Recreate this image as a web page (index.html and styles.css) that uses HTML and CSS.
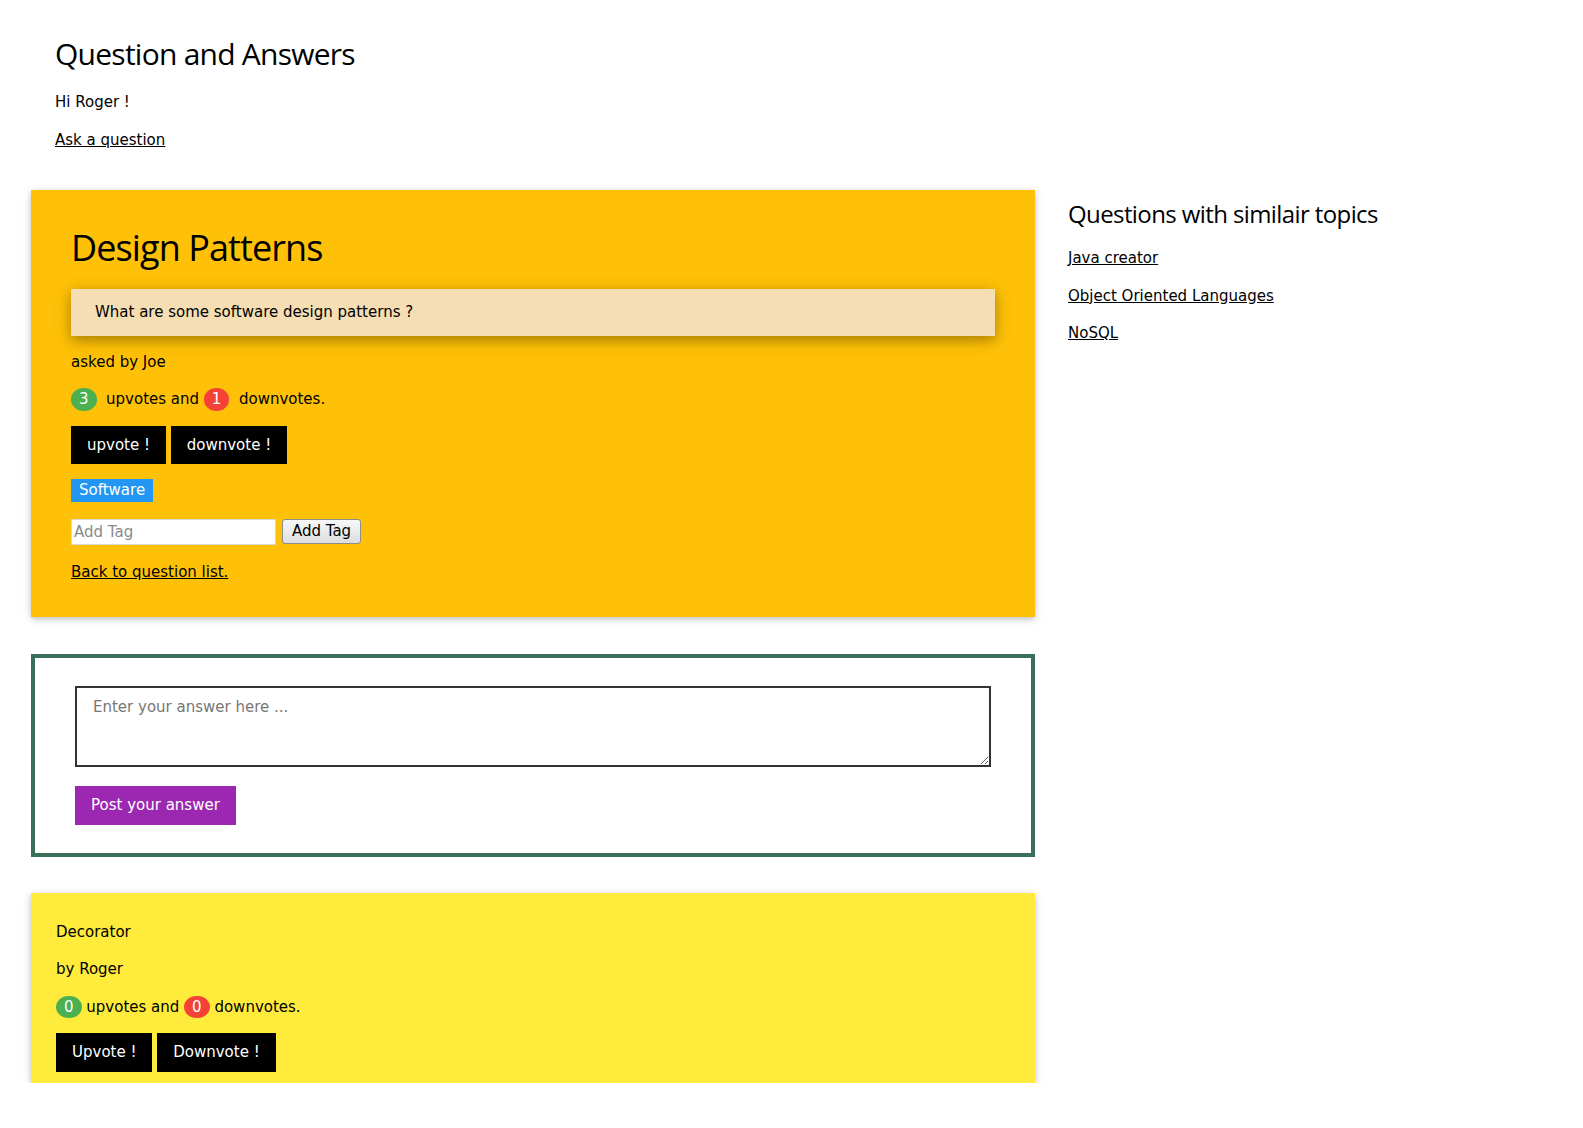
FILE: index.html
```html
<!DOCTYPE html>
<html lang="en">
<head>
<meta charset="utf-8">
<title>Question and Answers</title>
<link rel="stylesheet" href="styles.css">
</head>
<body>
<header class="page-header">
  <h2 class="page-title">Question and Answers</h2>
  <p>Hi Roger !</p>
  <p><a href="#">Ask a question</a></p>
</header>

<div class="row">
  <main class="main-col">
    <section class="question-card">
      <h1 class="question-title">Design Patterns</h1>
      <div class="question-body">What are some software design patterns ?</div>
      <p>asked by Joe</p>
      <p><span class="badge badge-green">3</span>&nbsp; upvotes and <span class="badge badge-red">1</span>&nbsp; downvotes.</p>
      <div class="btn-row"><button class="btn btn-black">upvote !</button> <button class="btn btn-black">downvote !</button></div>
      <p><span class="tag">Software</span></p>
      <form class="tag-form">
        <input class="tag-input" type="text" placeholder="Add Tag">
        <button class="tag-btn" type="button">Add Tag</button>
      </form>
      <p><a href="#">Back to question list.</a></p>
    </section>

    <section class="answer-box">
      <textarea class="answer-input" placeholder="Enter your answer here ..."></textarea>
      <div><button class="btn btn-purple">Post your answer</button></div>
    </section>

    <section class="answer-card">
      <p>Decorator</p>
      <p>by Roger</p>
      <p><span class="badge badge-green">0</span> upvotes and <span class="badge badge-red">0</span> downvotes.</p>
      <div class="btn-row"><button class="btn btn-black">Upvote !</button> <button class="btn btn-black">Downvote !</button></div>
    </section>
  </main>

  <aside class="side-col">
    <h3 class="side-title">Questions with similair topics</h3>
    <p><a href="#">Java creator</a></p>
    <p><a href="#">Object Oriented Languages</a></p>
    <p><a href="#">NoSQL</a></p>
  </aside>
</div>
</body>
</html>
```

FILE: styles.css
```css
html, body {
  margin: 0;
  padding: 0;
  background: #fff;
}

body {
  font-family: "DejaVu Sans", Verdana, sans-serif;
  font-size: 15px;
  line-height: 1.5;
  color: #000;
}

p {
  margin: 15px 0;
}

a {
  color: inherit;
  text-decoration: underline;
}

h1, h2, h3 {
  font-family: "Open Sans", "Noto Sans", sans-serif;
  font-weight: 400;
  letter-spacing: -0.025em;
}

.page-header {
  display: flow-root;
  padding: 21px 0 0 55px;
}

.page-title {
  font-size: 30px;
  margin: 10px 0;
}

.row {
  display: flex;
  align-items: flex-start;
  margin-top: 24px;
}

.main-col {
  width: 1004px;
  margin-left: 31px;
  flex: none;
}

.side-col {
  padding-left: 33px;
}

.side-title {
  font-size: 24px;
  margin: 6px 0 15px;
}

/* Question card */
.question-card {
  display: flow-root;
  background: #ffc107;
  padding: 21px 40px 19px;
  box-shadow: 0 2px 5px 0 rgba(0,0,0,0.16), 0 2px 10px 0 rgba(0,0,0,0.12);
}

.question-title {
  font-size: 36px;
  margin: 10px 0;
}

.question-body {
  background: #f5deb3;
  margin: 14px 0 15px;
  padding: 12px 24px;
  box-shadow: 0 4px 10px 0 rgba(0,0,0,0.2), 0 4px 20px 0 rgba(0,0,0,0.19);
}

.badge {
  display: inline-block;
  padding: 0 8px;
  border-radius: 50%;
  color: #fff;
  text-align: center;
}

.badge-green { background: #4caf50; }
.badge-red { background: #f44336; }

.btn-row {
  margin: 15px 0;
}

.btn {
  display: inline-block;
  border: none;
  padding: 8px 16px;
  font: inherit;
  line-height: 1.5;
  cursor: pointer;
  vertical-align: middle;
}

.btn-black {
  background: #000;
  color: #fff;
}

.btn-purple {
  background: #9c27b0;
  color: #fff;
}

.tag {
  display: inline-block;
  background: #2196f3;
  color: #fff;
  padding: 0 8px;
}

.tag-form {
  display: flex;
  align-items: center;
  margin: 17px 0 16px;
}

.tag-input {
  box-sizing: border-box;
  width: 205px;
  height: 26px;
  margin: 0;
  padding: 1px 2px;
  border: 1px solid #d8d8d8;
  background: #fff;
  font: inherit;
  font-size: 15px;
  color: #000;
}

.tag-input::placeholder {
  color: #8a8a8a;
}

.tag-btn {
  box-sizing: border-box;
  width: 79px;
  margin-left: 6px;
  height: 25px;
  padding: 0 6px;
  border: 1px solid #8d8d8d;
  border-radius: 3px;
  background: linear-gradient(#f7f7f7, #dedede);
  font: inherit;
  font-size: 15px;
  line-height: 1;
  color: #000;
}

/* Answer form */
.answer-box {
  margin-top: 37px;
  border: 4px solid #3a6f5a;
  padding: 28px 40px;
  background: #fff;
}

.answer-input {
  display: block;
  box-sizing: border-box;
  width: 100%;
  height: 81px;
  margin: 0 0 19px;
  padding: 8px 16px;
  border: 2px solid #333;
  font: inherit;
  line-height: 1.5;
  resize: vertical;
}

.answer-input::placeholder {
  color: #777;
}

/* Answer card */
.answer-card {
  display: flow-root;
  margin-top: 36px;
  background: #ffeb3b;
  padding: 13px 25px 11px;
  box-shadow: 0 2px 5px 0 rgba(0,0,0,0.16), 0 2px 10px 0 rgba(0,0,0,0.12);
}

.answer-card .btn-row {
  margin-bottom: 0;
}
```
